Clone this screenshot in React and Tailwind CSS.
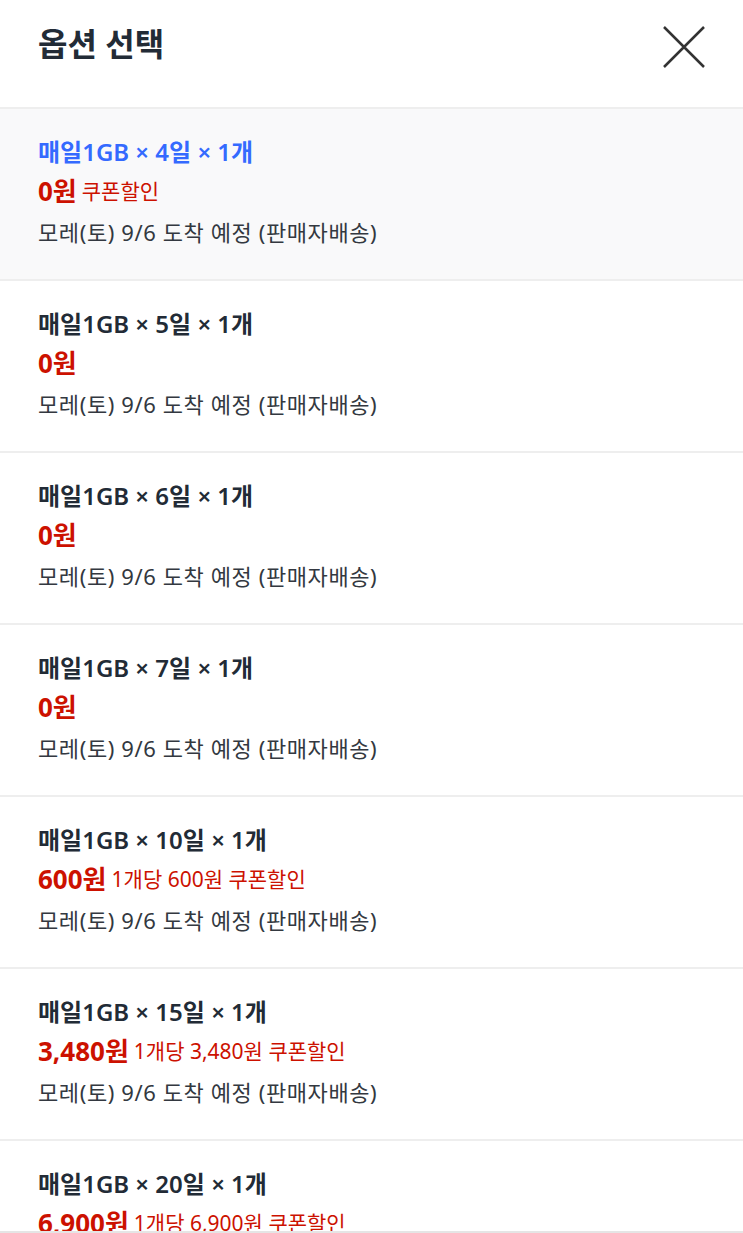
import React from 'react';

const options = [
  { days: 4, price: '0원', note: '쿠폰할인', selected: true },
  { days: 5, price: '0원' },
  { days: 6, price: '0원' },
  { days: 7, price: '0원' },
  { days: 10, price: '600원', note: '1개당 600원 쿠폰할인' },
  { days: 15, price: '3,480원', note: '1개당 3,480원 쿠폰할인' },
  { days: 20, price: '6,900원', note: '1개당 6,900원 쿠폰할인' },
];

function OptionRow({ option }) {
  return (
    <li className={`h-[172px] border-b-2 border-[#eeeeee] px-[38px] pt-[23px] ${option.selected ? 'bg-[#f9f9fa]' : 'bg-white'}`}>
      <div className={`text-[24px] leading-[40px] font-semibold ${option.selected ? 'text-[#346aff]' : 'text-[#222b36]'}`}>
        매일1GB × {option.days}일 × 1개
      </div>
      <div className="flex h-[39px] items-center gap-[5px] text-[#cc1100]">
        <span className="text-[26px] font-bold">{option.price}</span>
        {option.note && <span className="text-[21px]">{option.note}</span>}
      </div>
      <div className="mt-[1px] text-[22px] leading-[40px] tracking-[0.6px] text-[#333840]">
        모레(토) 9/6 도착 예정 (판매자배송)
      </div>
    </li>
  );
}

export default function App() {
  return (
    <div
      className="relative h-[1233px] w-[743px] overflow-hidden bg-white"
      style={{ fontFamily: '"Noto Sans", "Noto Sans CJK KR", sans-serif' }}
    >
      <header className="flex h-[109px] items-center justify-between border-b-2 border-[#eeeeee] pl-[38px] pr-[36px] pb-[20px]">
        <h1 className="text-[32px] font-bold text-[#222b36]">옵션 선택</h1>
        <button className="mt-[6px] text-[#333]" aria-label="닫기">
          <svg width="46" height="46" viewBox="0 0 46 46" fill="none" stroke="currentColor" strokeWidth="2.5">
            <path d="M3 3L43 43M43 3L3 43" />
          </svg>
        </button>
      </header>
      <ul>
        {options.map((o) => (
          <OptionRow key={o.days} option={o} />
        ))}
      </ul>
      <div className="absolute bottom-0 left-0 h-[2px] w-full bg-[#e5e5e5]" />
    </div>
  );
}
